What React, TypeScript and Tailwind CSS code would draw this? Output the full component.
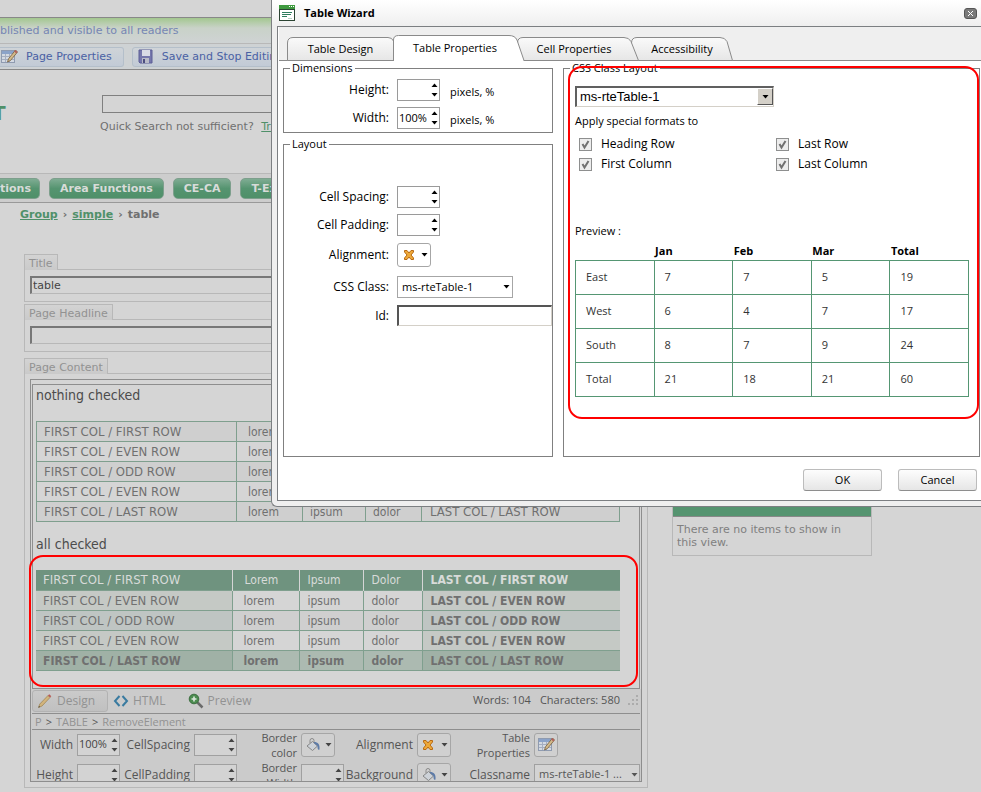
import React, { ReactNode } from "react";

const dialogFont = "font-['Open_Sans','Noto_Sans',sans-serif]";

/* ---------- small drawings ---------- */

function UpArrow({ className = "" }: { className?: string }) {
  return (
    <svg width="7" height="4" viewBox="0 0 7 4" className={className} aria-hidden="true">
      <path d="M0.5 4 L3.5 0.5 L6.5 4 Z" fill="currentColor" />
    </svg>
  );
}

function DownArrow({ className = "" }: { className?: string }) {
  return (
    <svg width="7" height="4" viewBox="0 0 7 4" className={className} aria-hidden="true">
      <path d="M0.5 0 L3.5 3.5 L6.5 0 Z" fill="currentColor" />
    </svg>
  );
}

function CrossIcon() {
  return (
    <svg width="12" height="10" viewBox="0 0 12 10" aria-hidden="true">
      <path
        d="M1.500.500h2.500L6 3 8 .500h2.500V2L8 5l2.500 3v1.500H8L6 7 4 9.500H1.500V8L4 5 1.500 2z"
        fill="#eda93a"
        stroke="#b96a14"
        strokeWidth="1"
      />
    </svg>
  );
}

function BucketIcon() {
  return (
    <svg width="15" height="14" viewBox="0 0 15 14" aria-hidden="true">
      <path d="M4 5V2.500a2 2 0 0 1 4 0V6" fill="none" stroke="#8a8a8a" />
      <path d="M6.500 3.500l5 4.500-5 4.500L1 8z" fill="#cdd2d8" stroke="#868686" />
      <path d="M8 4c4 0 6 2 5.500 7.500-1.500 1-2-.5-2-3.500L8 5z" fill="#5d7ba8" />
    </svg>
  );
}

function GridPencilIcon() {
  return (
    <svg width="17" height="15" viewBox="0 0 17 15" aria-hidden="true">
      <rect x="0.5" y="1.500" width="13" height="12" fill="#d3d9e2" stroke="#8f9bb0" />
      <rect x="1" y="2" width="12" height="3" fill="#8ba3c9" />
      <path d="M1 7.500h12M1 10.500h12M4.500 5v8M8.500 5v8" stroke="#a5aec0" fill="none" />
      <path d="M14.500 1l2 2-7 8.500-3 1.500 1-3.200z" fill="#d2b98a" stroke="#77603e" strokeWidth="0.8" />
      <path d="M14.500 1l2 2-1.300 1.500-2-2z" fill="#b2605c" />
    </svg>
  );
}

function DiskIcon() {
  return (
    <svg width="15" height="15" viewBox="0 0 15 15" aria-hidden="true">
      <path d="M1 1h13v13H2l-1-1z" fill="#7577ac" stroke="#5d5f96" />
      <rect x="4" y="1" width="8" height="6" fill="#d9dbe6" />
      <rect x="4" y="9" width="7" height="5" fill="#b9bbc8" />
      <rect x="5" y="10" width="2" height="4" fill="#4c4e80" />
    </svg>
  );
}

function PencilIcon() {
  return (
    <svg width="16" height="16" viewBox="0 0 16 16" aria-hidden="true">
      <path d="M1.500 14.500l1.300-3.500L11 2.500l2 2L5 13z" fill="#d2b47c" stroke="#9a7f50" strokeWidth="0.7" />
      <path d="M11 2.500L12.300 1.200l2 2L13 4.500z" fill="#b85a56" />
      <path d="M1.500 14.500l.5-1.500 1 1z" fill="#333" />
    </svg>
  );
}

function CodeIcon() {
  return (
    <svg width="16" height="12" viewBox="0 0 16 12" aria-hidden="true">
      <path d="M6.500 1L2 6l4.500 5M9.500 1L14 6l-4.500 5" fill="none" stroke="#3a7ba0" strokeWidth="2" />
    </svg>
  );
}

function MagnifierIcon() {
  return (
    <svg width="16" height="16" viewBox="0 0 16 16" aria-hidden="true">
      <path d="M9 9l5.500 5.500" stroke="#6b6b6b" strokeWidth="2.500" />
      <circle cx="6" cy="6" r="4.800" fill="#4c8c50" stroke="#3c6e40" />
      <path d="M6 3.500v5M3.500 6h5" stroke="#dfe8df" strokeWidth="1.600" />
    </svg>
  );
}

function WizardIcon() {
  return (
    <svg width="16" height="16" viewBox="0 0 16 16" aria-hidden="true">
      <rect x="0.5" y="0.5" width="15" height="15" fill="#fff" stroke="#2c4433" />
      <rect x="0" y="0" width="16" height="4" fill="#3f9a3f" />
      <path d="M10 1.500h1M12 1.500h1M14 1.500h1" stroke="#fff" />
      <path d="M0 4.500h16" stroke="#2c4433" />
      <path d="M3 7.500h10M3 9.500h9M3 11.500h5" stroke="#2f7d5e" />
      <path d="M9 13.500h4" stroke="#b9d3c5" />
    </svg>
  );
}

function CheckMark() {
  return (
    <svg
      width="13"
      height="13"
      viewBox="0 0 13 13"
      className="pointer-events-none col-start-1 row-start-1"
      aria-hidden="true"
    >
      <path d="M3.500 6l2 3.500L9.500 3" fill="none" stroke="#707070" strokeWidth="2" />
    </svg>
  );
}

/* ---------- shared controls ---------- */

function Spin({ id, label, value = "", dim = false }: { id: string; label?: string; value?: string; dim?: boolean }) {
  return (
    <span
      className={
        dim
          ? "flex h-[22px] w-[43px] border border-[#a0a0a0] bg-[#d3d3d3] text-[#444]"
          : "flex h-[22px] w-[43px] border border-[#9a9a9a] bg-white text-black"
      }
    >
      <input id={id} aria-label={label} defaultValue={value} className="w-8 min-w-0 flex-1 bg-transparent pl-px text-[11px] outline-none" />
      <span className="flex w-[10px] shrink-0 flex-col items-center justify-between py-[3px]">
        <button type="button" aria-label="Increase" className="flex">
          <UpArrow />
        </button>
        <button type="button" aria-label="Decrease" className="flex">
          <DownArrow />
        </button>
      </span>
    </span>
  );
}

function DropButton({ label, dim = false, children }: { label: string; dim?: boolean; children: ReactNode }) {
  return (
    <button
      type="button"
      aria-label={label}
      className={
        dim
          ? "flex h-6 w-[34px] shrink-0 items-center justify-between rounded-[3px] border border-[#a6a6a6] bg-[#d0d0d0] pr-[2px] pl-1 text-[#444]"
          : "flex h-6 w-[34px] shrink-0 items-center justify-between rounded-[3px] border border-[#a6a6a6] bg-white pr-[2px] pl-[5px] text-black"
      }
    >
      {children}
      <DownArrow />
    </button>
  );
}

/* ---------- page behind the dialog ---------- */

function NavPill({ children, first = false }: { children: ReactNode; first?: boolean }) {
  return (
    <a
      href="#"
      className={
        first
          ? "flex h-[21px] items-center rounded-r-[5px] border border-l-0 border-[#7d9f8c] bg-linear-to-b from-[#7fac93] via-[#559470] to-[#4f9069] pr-[8px]"
          : "flex h-[21px] items-center rounded-[5px] border border-[#7d9f8c] bg-linear-to-b from-[#7fac93] via-[#559470] to-[#4f9069] px-[10px]"
      }
    >
      {children}
    </a>
  );
}

function FieldPanel({ label, className, children }: { label: string; className: string; children: ReactNode }) {
  return (
    <section className={className}>
      <div className="flex h-[15px]">
        <h2 className="relative z-10 flex h-4 items-center border border-b-0 border-[#b8b8b8] bg-linear-to-b from-[#d3d3d3] to-[#cacaca] px-1 pt-px text-[#929292]">
          {label}
        </h2>
      </div>
      <div className="border border-[#b8b8b8] px-[5px]">{children}</div>
    </section>
  );
}

const plainRows = ["FIRST ROW", "EVEN ROW", "ODD ROW", "EVEN ROW", "LAST ROW"];

function PlainTable() {
  const cell = "border border-[#7f9f8e] p-0 pt-px";
  return (
    <table className="w-full max-w-[584px] table-fixed border-collapse text-xs leading-4 text-[#707070]">
      <colgroup>
        <col className="w-[200px]" />
        <col className="w-[66px]" />
        <col className="w-[63px]" />
        <col className="w-[56px]" />
        <col />
      </colgroup>
      <tbody>
        {plainRows.map((r, i) => (
          <tr key={i} className={i % 2 === 0 ? "h-5 bg-[#cfcfcf]" : "h-5"}>
            <td className={`${cell} pl-[7px] text-[13px]`}>FIRST COL / {r}</td>
            <td className={`${cell} pl-[11px]`}>lorem</td>
            <td className={`${cell} pl-[7px]`}>ipsum</td>
            <td className={`${cell} pl-[7px]`}>dolor</td>
            <td className={`${cell} pl-2 text-[13px]`}>LAST COL / {r}</td>
          </tr>
        ))}
      </tbody>
    </table>
  );
}

function StyledTable() {
  const head = "border-r border-[#d5d5d5] p-0 pt-px text-left font-normal";
  const cell = "border border-[#7f9f8e] p-0 pt-px";
  return (
    <table className="w-full max-w-[584px] table-fixed border-collapse text-xs leading-4 text-[#707070]">
      <colgroup>
        <col className="w-[196px]" />
        <col className="w-[67px]" />
        <col className="w-[64px]" />
        <col className="w-[59px]" />
        <col />
      </colgroup>
      <thead>
        <tr className="h-5 bg-[#6f937f] text-[#d8dbd9]">
          <th className={`${head} pl-[7px] text-[13px]`}>FIRST COL / FIRST ROW</th>
          <th className={`${head} pl-3`}>Lorem</th>
          <th className={`${head} pl-2`}>Ipsum</th>
          <th className={`${head} pl-2`}>Dolor</th>
          <th className="p-0 pt-px pl-2 text-left font-bold">LAST COL / FIRST ROW</th>
        </tr>
      </thead>
      <tbody>
        {["EVEN ROW", "ODD ROW", "EVEN ROW"].map((r, i) => (
          <tr key={i} className={i === 1 ? "h-5 bg-[#cfcfcf]" : "h-5"}>
            <td className={`${cell} border-l-0 pl-[7px] text-[13px] ${i === 1 ? "bg-[#bfc5c3]" : "bg-[#c5c9c5]"}`}>FIRST COL / {r}</td>
            <td className={`${cell} pl-[11px]`}>lorem</td>
            <td className={`${cell} pl-2`}>ipsum</td>
            <td className={`${cell} pl-2`}>dolor</td>
            <td className={`${cell} border-r-0 pl-2 font-bold ${i === 1 ? "bg-[#bfc5c3]" : "bg-[#c5c9c5]"}`}>LAST COL / {r}</td>
          </tr>
        ))}
        <tr className="h-5 bg-[#acbab1] font-bold">
          <td className={`${cell} border-l-0 bg-[#a0b1a6] pl-[7px]`}>FIRST COL / LAST ROW</td>
          <td className={`${cell} pl-[11px]`}>lorem</td>
          <td className={`${cell} pl-2`}>ipsum</td>
          <td className={`${cell} pl-2`}>dolor</td>
          <td className={`${cell} border-r-0 bg-[#a0b1a6] pl-2`}>LAST COL / LAST ROW</td>
        </tr>
      </tbody>
    </table>
  );
}

function EditorTools() {
  const label = "text-right leading-[15px] pt-[7px]";
  const twoLine = "text-right text-[11px] leading-[15px]";
  return (
    <div className="grid h-[51px] grid-cols-[41px_43px_66px_43px_56px_34px_74px_34px_75px_1fr] gap-x-1 gap-y-0 overflow-hidden text-xs text-[#555]">
      <label htmlFor="ed-width" className={label}>Width</label>
      <div className="h-[30px] pt-1"><Spin id="ed-width" value="100%" dim /></div>
      <label htmlFor="ed-spacing" className={label}>CellSpacing</label>
      <div className="pt-1"><Spin id="ed-spacing" dim /></div>
      <span className={twoLine}>Border<br />color</span>
      <div className="pt-[3px]"><DropButton label="Border color" dim><BucketIcon /></DropButton></div>
      <span className={label}>Alignment</span>
      <div className="pt-[3px]"><DropButton label="Alignment" dim><CrossIcon /></DropButton></div>
      <span className={twoLine}>Table<br />Properties</span>
      <div className="pt-[3px]">
        <button type="button" aria-label="Table Properties" className="flex h-6 w-6 items-center justify-center rounded-[3px] border border-[#a6a6a6] bg-[#d0d0d0]">
          <GridPencilIcon />
        </button>
      </div>

      <label htmlFor="ed-height" className={label}>Height</label>
      <div className="pt-1"><Spin id="ed-height" dim /></div>
      <label htmlFor="ed-padding" className={label}>CellPadding</label>
      <div className="pt-1"><Spin id="ed-padding" dim /></div>
      <label htmlFor="ed-border" className={twoLine}>Border<br />Width</label>
      <div className="pt-1"><Spin id="ed-border" dim /></div>
      <span className={label}>Background</span>
      <div className="pt-[3px]"><DropButton label="Background" dim><BucketIcon /></DropButton></div>
      <label htmlFor="ed-class" className={label}>Classname</label>
      <div className="grid pt-1">
        <select id="ed-class" className="col-start-1 row-start-1 h-[22px] w-full appearance-none border border-[#a0a0a0] bg-[#d3d3d3] pl-1 text-[11px] outline-none">
          <option>ms-rteTable-1 ...</option>
        </select>
        <DownArrow className="pointer-events-none col-start-1 row-start-1 mt-[9px] mr-[2px] justify-self-end" />
      </div>
    </div>
  );
}

function Editor() {
  return (
    <div className="relative mt-[5px] mb-[5px] border border-[#8e8e8e] bg-[#cbcbcb]">
      <div className="bg-[#d5d5d5] px-px pt-1">
        <div className="border border-[#8e8e8e] px-[3px] pb-[17px] font-['DejaVu_Sans_Condensed','DejaVu_Sans',sans-serif]">
          <p className="mb-[16px] text-[14px] leading-5 text-[#4c4c4c]">nothing checked</p>
          <PlainTable />
          <p className="mt-[12px] mb-[16px] text-[14px] leading-5 text-[#4c4c4c]">all checked</p>
          <StyledTable />
        </div>
      </div>
      <div className="pointer-events-none absolute top-[175px] right-[3px] -left-[2px] h-[132px] rounded-[14px] border-2 border-[#ff0000]" />

      <div className={`px-px ${dialogFont}`}>
        <div className="flex h-[25px] items-center border-b border-[#8e8e8e] text-xs text-[#929292]">
          <button type="button" className="flex h-[22px] w-[76px] items-center gap-1 rounded-[3px] border border-[#b2b2b2] bg-linear-to-b from-[#cacaca] to-[#c0c0c0] pl-1">
            <PencilIcon /> Design
          </button>
          <button type="button" className="ml-[5px] flex items-center gap-1">
            <CodeIcon /> HTML
          </button>
          <button type="button" className="ml-[22px] flex items-center gap-1">
            <MagnifierIcon /> Preview
          </button>
          <span className="ml-auto text-[11px] text-[#555]">Words: 104</span>
          <span className="ml-[9px] text-[11px] text-[#555]">Characters: 580</span>
          <svg width="11" height="11" viewBox="0 0 11 11" className="mr-px ml-2" aria-hidden="true">
            <path d="M8 0h2v2h-2zM4 4h2v2h-2zM8 4h2v2h-2zM0 8h2v2h-2zM4 8h2v2h-2zM8 8h2v2h-2z" fill="#acacac" />
          </svg>
        </div>
        <div className="flex h-4 items-center gap-1 border-b border-[#8e8e8e] pl-[3px] text-[11px] text-[#929292]">
          <a href="#">P</a>
          <span className="text-[#555]">&gt;</span>
          <a href="#">TABLE</a>
          <span className="text-[#555]">&gt;</span>
          <a href="#">RemoveElement</a>
        </div>
        <EditorTools />
      </div>
    </div>
  );
}

function PageBehind() {
  const textBox = "block w-full border-t-2 border-l-2 border-r border-b border-t-[#777] border-l-[#777] border-r-[#b8b8b8] border-b-[#b8b8b8] bg-transparent pl-px text-[#444] outline-none h-[18px]";
  return (
    <div className="text-[11px] leading-[13px] text-[#707070]">
      <div className="h-[18px] border-b border-[#888]" />
      <div className="flex h-[26px] items-center border-b border-[#b8b8b8] bg-linear-to-b from-[#a3c78f] via-[#c9d2c8] via-40% to-[#cfd3d4] text-[#7686b4]">
        blished and visible to all readers
      </div>
      <div className="flex h-[26px] items-center gap-2 border-b border-[#888] bg-[#ced2d4] text-[#4a61a4]">
        <a href="#" className="flex h-5 items-center gap-2 rounded-r-[3px] border border-l-0 border-[#b4bfca] bg-linear-to-b from-[#cfd4d8] to-[#c2cbd6] pr-[11px] pl-px">
          <GridPencilIcon /> Page Properties
        </a>
        <a href="#" className="flex h-5 w-[160px] items-center gap-[9px] rounded-[3px] border border-[#b4bfca] bg-linear-to-b from-[#cfd4d8] to-[#c2cbd6] pl-[5px] whitespace-nowrap">
          <DiskIcon /> Save and Stop Editing
        </a>
      </div>

      <header className="flex h-[103px] pt-[25px]">
        <div className="w-[100px] pt-[8px]">
          <span className="-ml-[8px] block text-[20px] leading-5 font-bold text-[#4f9069]">T</span>
        </div>
        <div>
          <input aria-label="Quick search" className="ml-[2px] block h-[18px] w-[240px] border border-[#808080] bg-transparent outline-none" />
          <p className="mt-[7px]">
            Quick Search not sufficient?{" "}
            <a href="#" className="ml-1 text-[#4f9069] underline">Try advanced</a>
          </p>
        </div>
      </header>

      <nav className="flex h-[30px] items-center gap-[9px] border-t border-b border-t-[#b8b8b8] border-b-[#999] bg-[#cdcdcd] font-bold whitespace-nowrap text-[#d8dbd9]">
        <NavPill first>tions</NavPill>
        <NavPill>Area Functions</NavPill>
        <NavPill>CE-CA</NavPill>
        <NavPill>T-Exchange</NavPill>
      </nav>

      <div className="flex gap-[5px] pt-[5px] pl-5 font-bold">
        <a href="#" className="text-[#4f9069] underline">Group</a>
        <span>›</span>
        <a href="#" className="text-[#4f9069] underline">simple</a>
        <span>›</span>
        <span>table</span>
      </div>

      <main className="flex gap-6 pt-[33px] pr-[109px] pl-6">
        <div className="min-w-0 flex-1">
          <FieldPanel label="Title" className="">
            <input aria-label="Title" defaultValue="table" className={`${textBox} mt-[6px] mb-[7px]`} />
          </FieldPanel>
          <FieldPanel label="Page Headline" className="mt-[2px]">
            <input aria-label="Page Headline" className={`${textBox} mt-[6px] mb-[7px]`} />
          </FieldPanel>
          <FieldPanel label="Page Content" className="mt-[6px]">
            <Editor />
          </FieldPanel>
        </div>
        <aside className="w-[200px] shrink-0 pt-[240px]">
          <div className="border border-[#b8b8b8]">
            <div className="flex h-[22px] items-start border-b border-[#888] bg-[#559470] pl-2">
              <svg width="14" height="15" viewBox="0 0 14 15" aria-hidden="true">
                <rect x="0" y="4" width="13" height="7" fill="#c4c8d0" stroke="#7a7aa0" />
              </svg>
            </div>
            <p className="pt-[6px] pr-5 pb-[6px] pl-1 text-[#808080]">There are no items to show in this view.</p>
          </div>
        </aside>
      </main>
    </div>
  );
}

/* ---------- dialog ---------- */

function SlantTab({ label, active = false, slanted = false, className, path, width }: { label: string; active?: boolean; slanted?: boolean; className: string; path: string; width: number }) {
  const height = active ? 26 : 24;
  return (
    <button type="button" role="tab" aria-selected={active} className={`grid shrink-0 items-center ${className}`}>
      <svg width={width} height={height} viewBox={`0 0 ${width} ${height}`} className="col-start-1 row-start-1" aria-hidden="true">
        <defs>
          <linearGradient id="tabFill" x1="0" y1="0" x2="0" y2="1">
            <stop offset="0" stopColor="#fafafa" />
            <stop offset="1" stopColor="#e6e6e6" />
          </linearGradient>
        </defs>
        <path d={path} fill={active ? "#ffffff" : "url(#tabFill)"} stroke="#8a8a8a" />
      </svg>
      <span className={slanted ? "col-start-1 row-start-1 pr-2" : "col-start-1 row-start-1"}>{label}</span>
    </button>
  );
}

function FormRow({ label, htmlFor, className = "", children }: { label: string; htmlFor?: string; className?: string; children: ReactNode }) {
  return (
    <div className={`flex items-center gap-2 ${className}`}>
      <label htmlFor={htmlFor} className="w-[105px] shrink-0 text-right text-xs leading-4">{label}</label>
      {children}
    </div>
  );
}

function Check({ id, label }: { id: string; label: string }) {
  return (
    <div className="flex h-5 items-center gap-[9px]">
      <span className="grid">
        <input id={id} type="checkbox" defaultChecked className="col-start-1 row-start-1 h-[13px] w-[13px] appearance-none border border-[#8e8f8f] bg-[#ececec]" />
        <CheckMark />
      </span>
      <label htmlFor={id} className="text-xs">{label}</label>
    </div>
  );
}

const previewRows = [
  ["East", "7", "7", "5", "19"],
  ["West", "6", "4", "7", "17"],
  ["South", "8", "7", "9", "24"],
  ["Total", "21", "18", "21", "60"],
];

function Preview() {
  return (
    <table className="w-full table-fixed border-collapse">
      <thead>
        <tr className="h-[17px] leading-4">
          <td />
          {["Jan", "Feb", "Mar", "Total"].map((m) => (
            <th key={m} className="p-0 pl-px text-left font-bold">{m}</th>
          ))}
        </tr>
      </thead>
      <tbody className="text-[#333]">
        {previewRows.map((row) => (
          <tr key={row[0]} className="h-[34px]">
            {row.map((v, i) => (
              <td key={i} className="border border-[#559673] p-0 pl-[10px]">{v}</td>
            ))}
          </tr>
        ))}
      </tbody>
    </table>
  );
}

function TableWizard() {
  return (
    <div
      role="dialog"
      aria-label="Table Wizard"
      className={`absolute top-0 right-0 left-[271px] rounded-bl-[6px] border-b border-l border-[#7c7f82] bg-[#efefef] pb-[5px] pl-[5px] text-[11px] leading-4 text-black ${dialogFont}`}
    >
      <div className="-ml-[5px] flex h-[26px] items-center bg-linear-to-b from-white to-[#efefef] pr-1 pl-[7px]">
        <WizardIcon />
        <h1 className="ml-[9px] text-[11px] font-bold">Table Wizard</h1>
        <button type="button" aria-label="Close" className="ml-auto flex h-[11px] w-[13px] items-center justify-center rounded-[3px] border border-[#555] bg-[#7a7a7a]">
          <svg width="7" height="7" viewBox="0 0 7 7" aria-hidden="true">
            <path d="M1 1l5 5M6 1l-5 5" stroke="#fff" />
          </svg>
        </button>
      </div>

      <div className="border-t border-b border-l border-[#7c7f82] bg-white">
        <div role="tablist" className="ml-px flex h-[34px] items-end border-b border-[#8a8a8a] bg-[#efefef] pl-2">
          <SlantTab label="Table Design" className="z-10 -mb-px" width={107} path="M.5 23.500V6Q.5.500 6 .500H101Q105 .500 106.500 4V23.500Z" />
          <SlantTab label="Table Properties" active slanted className="z-20 -mb-px -ml-px" width={132} path="M.5 27V5Q.5.500 5.500.500H116Q122 .500 124 5L131.500 27" />
          <SlantTab label="Cell Properties" slanted className="z-10 -mb-px -ml-2" width={122} path="M.5 23.500V6Q.5.500 6 .500H107Q112 .500 114 4.500L121.500 23.500Z" />
          <SlantTab label="Accessibility" className="-mb-px -ml-2" width={102} path="M.5 23.500V6Q.5.500 6 .500H89Q94 .500 96 4.500L101.500 23.500Z" />
        </div>

        <div className="flex gap-[10px] pr-px pl-[5px]">
          <div className="flex w-[270px] shrink-0 flex-col gap-1">
            <fieldset className="border border-[#808080] pb-[3px]">
              <legend className="ml-[6px] px-[2px] leading-[14px]">Dimensions</legend>
              <FormRow label="Height:" htmlFor="dlg-height" className="mt-1">
                <Spin id="dlg-height" />
                <span className="ml-[2px] pt-1">pixels, %</span>
              </FormRow>
              <FormRow label="Width:" htmlFor="dlg-width" className="mt-[6px]">
                <Spin id="dlg-width" value="100%" />
                <span className="ml-[2px] pt-1">pixels, %</span>
              </FormRow>
            </fieldset>
            <fieldset className="flex-1 border border-[#808080]">
              <legend className="ml-[6px] px-[2px] leading-[14px]">Layout</legend>
              <FormRow label="Cell Spacing:" htmlFor="dlg-spacing" className="mt-[35px]">
                <Spin id="dlg-spacing" />
              </FormRow>
              <FormRow label="Cell Padding:" htmlFor="dlg-padding" className="mt-[6px]">
                <Spin id="dlg-padding" />
              </FormRow>
              <FormRow label="Alignment:" className="mt-[7px]">
                <DropButton label="Alignment"><CrossIcon /></DropButton>
              </FormRow>
              <FormRow label="CSS Class:" htmlFor="dlg-class" className="mt-[9px]">
                <span className="grid items-center">
                  <select id="dlg-class" className="col-start-1 row-start-1 h-[22px] w-[116px] appearance-none border border-[#a6a6a6] bg-white pl-1 text-[11px] outline-none">
                    <option>ms-rteTable-1</option>
                  </select>
                  <DownArrow className="pointer-events-none col-start-1 row-start-1 mr-[3px] justify-self-end" />
                </span>
              </FormRow>
              <FormRow label="Id:" htmlFor="dlg-id" className="mt-[7px]">
                <input id="dlg-id" className="h-[21px] min-w-0 flex-1 border-t-2 border-r border-b border-l-2 border-t-[#555] border-r-[#d4d0c8] border-b-[#d4d0c8] border-l-[#555] bg-white outline-none" />
              </FormRow>
            </fieldset>
          </div>

          <fieldset className="relative min-w-0 flex-1 border border-[#808080] pr-[10px] pb-[59px] pl-[11px]">
            <legend className="-ml-[5px] px-[2px] leading-[14px]">CSS Class Layout</legend>
            <div className="grid w-[199px] pt-[11px]">
              <select
                aria-label="Table style"
                className="col-start-1 row-start-1 h-[21px] appearance-none border-t-2 border-r border-b border-l-2 border-t-[#606060] border-r-[#d4d0c8] border-b-[#d4d0c8] border-l-[#606060] bg-white pl-[3px] font-['Liberation_Sans',Arial,sans-serif] text-[13px] outline-none"
              >
                <option>ms-rteTable-1</option>
              </select>
              <span className="pointer-events-none col-start-1 row-start-1 mt-[2px] mr-px flex h-[17px] w-4 items-center justify-center justify-self-end border border-t-white border-r-[#555] border-b-[#555] border-l-white bg-[#d4d0c8]">
                <DownArrow />
              </span>
            </div>
            <p className="mt-[6px]">Apply special formats to</p>
            <div className="mt-[5px] grid grid-cols-[197px_1fr] pl-1">
              <Check id="chk-head" label="Heading Row" />
              <Check id="chk-last" label="Last Row" />
              <Check id="chk-first" label="First Column" />
              <Check id="chk-lastcol" label="Last Column" />
            </div>
            <p className="mt-[49px] mb-1">Preview :</p>
            <Preview />
            <div className="pointer-events-none absolute -top-[9px] right-0 bottom-[37px] left-[4px] rounded-[14px] border-2 border-[#ff0000]" />
          </fieldset>
        </div>

        <div className="flex justify-end gap-4 pt-3 pr-1 pb-[9px]">
          <button type="button" className="h-[22px] w-[79px] rounded-[3px] border border-[#bcbcbc] border-b-[#8e8e8e] bg-linear-to-b from-[#fdfdfd] to-[#e6e6e6]">OK</button>
          <button type="button" className="h-[22px] w-[79px] rounded-[3px] border border-[#bcbcbc] border-b-[#8e8e8e] bg-linear-to-b from-[#fdfdfd] to-[#e6e6e6]">Cancel</button>
        </div>
      </div>
    </div>
  );
}

export default function App() {
  return (
    <div className="relative min-h-screen overflow-hidden bg-[#d5d5d5] font-['DejaVu_Sans',Verdana,sans-serif]">
      <PageBehind />
      <TableWizard />
    </div>
  );
}
